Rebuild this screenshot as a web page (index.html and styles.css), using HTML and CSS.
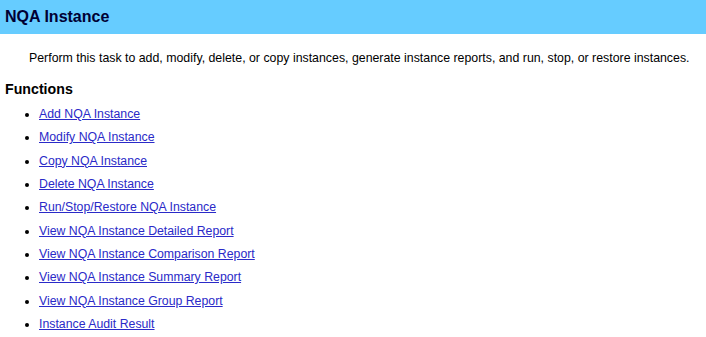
FILE: index.html
```html
<!DOCTYPE html>
<html>
<head>
<meta charset="utf-8">
<link rel="stylesheet" href="styles.css">
</head>
<body>
<div class="banner"><h1 class="title">NQA Instance</h1></div>
<p class="intro">Perform this task to add, modify, delete, or copy instances, generate instance reports, and run, stop, or restore instances.</p>
<h2 class="section">Functions</h2>
<ul class="funcs">
<li><a href="#">Add NQA Instance</a></li>
<li><a href="#">Modify NQA Instance</a></li>
<li><a href="#">Copy NQA Instance</a></li>
<li><a href="#">Delete NQA Instance</a></li>
<li><a href="#">Run/Stop/Restore NQA Instance</a></li>
<li><a href="#">View NQA Instance Detailed Report</a></li>
<li><a href="#">View NQA Instance Comparison Report</a></li>
<li><a href="#">View NQA Instance Summary Report</a></li>
<li><a href="#">View NQA Instance Group Report</a></li>
<li><a href="#">Instance Audit Result</a></li>
</ul>
</body>
</html>
```
FILE: styles.css
```css
html, body { margin: 0; padding: 0; background: #fff; }
body { font-family: "Liberation Sans", Arial, sans-serif; color: #000; }
.banner { background: #66ccff; height: 34px; display: flex; align-items: center; padding-left: 5px; }
.title { margin: 0; font-size: 16px; font-weight: bold; color: #000033; }
.intro { margin: 16px 0 0 29px; font-size: 12.35px; line-height: 16px; }
.section { margin: 14px 0 0 5px; font-size: 14.2px; font-weight: bold; line-height: 18px; }
.funcs { margin: 8px 0 0 0; padding-left: 39px; font-size: 12.3px; }
.funcs li { line-height: 16px; margin-bottom: 7.33px; }
.funcs a { color: #2a2ac8; }
```
